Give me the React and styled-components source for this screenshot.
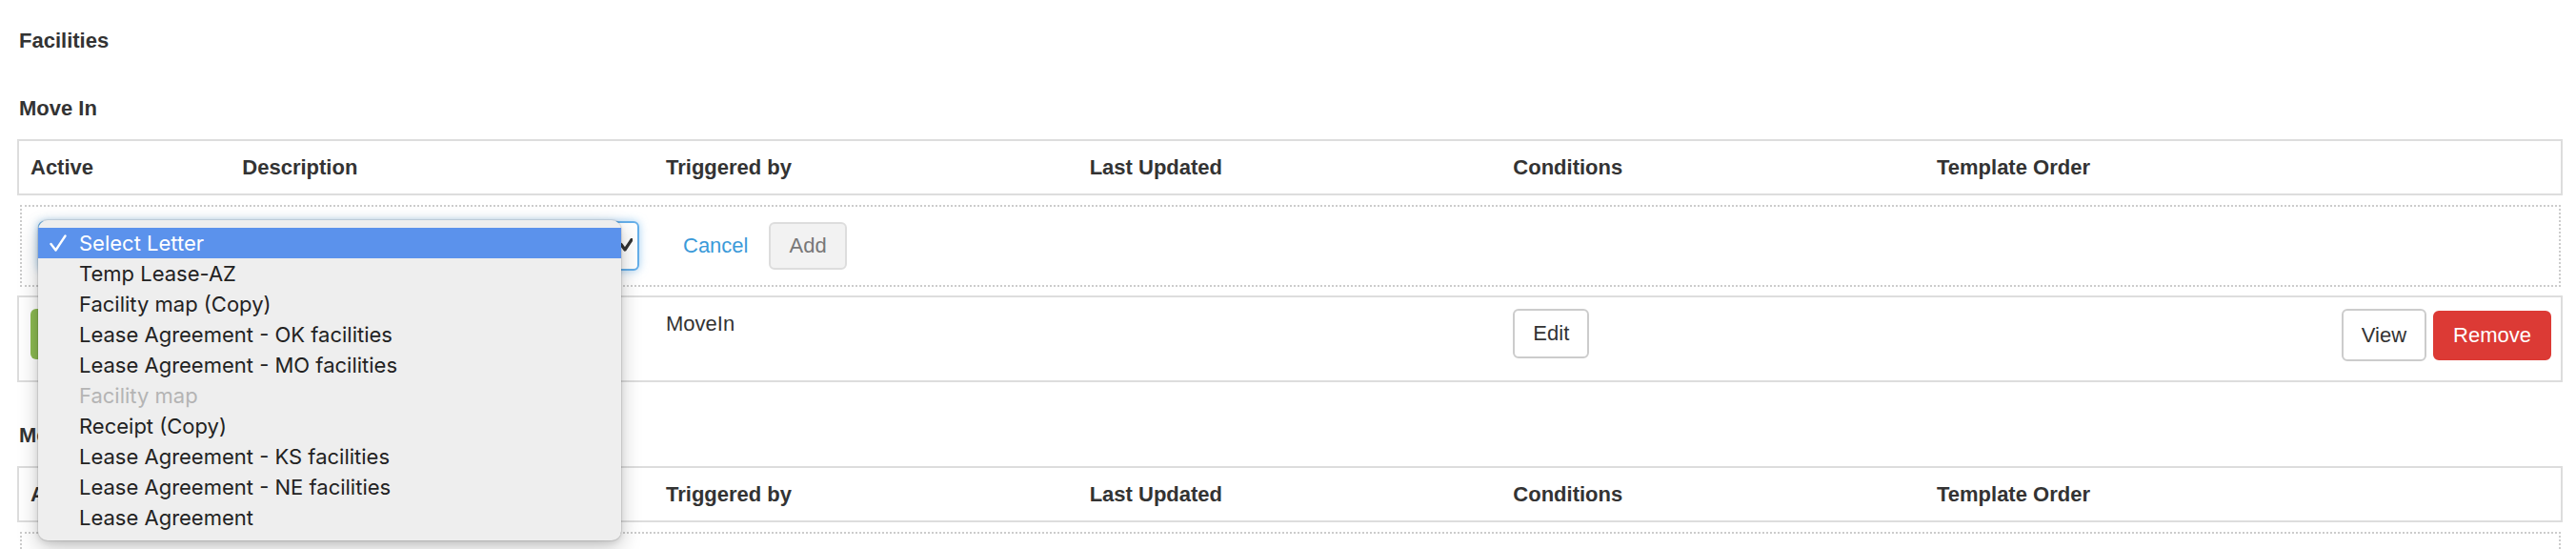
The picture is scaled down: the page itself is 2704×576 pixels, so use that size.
import React from "react";
import styled, { createGlobalStyle } from "styled-components";

const GlobalStyle = createGlobalStyle`
  html, body {
    margin: 0;
    padding: 0;
    background: #ffffff;
  }
  body {
    font-family: "Liberation Sans", Arial, Helvetica, sans-serif;
    color: #333333;
    font-size: 22px;
    line-height: 30px;
  }
  * { box-sizing: border-box; }
`;

const Page = styled.div`
  padding: 28px 14px 0 18px;
`;

const PageTitle = styled.h1`
  margin: 0 0 41px 2px;
  font-size: 22px;
  line-height: 30px;
  font-weight: bold;
`;

const SectionTitle = styled.h2`
  margin: ${(p) => (p.$spaced ? "41px" : "0")} 0 17px 2px;
  font-size: 22px;
  line-height: 30px;
  font-weight: bold;
`;

const columns = "1fr 2fr 2fr 2fr 2fr 3fr";

const HeaderBox = styled.div`
  display: grid;
  grid-template-columns: ${columns};
  align-items: center;
  height: 59px;
  border: 2px solid #dddddd;
  font-weight: bold;
`;

const HeadCell = styled.div`
  padding-left: 12px;
  white-space: nowrap;
`;

const AddRow = styled.div`
  display: flex;
  align-items: center;
  height: 86px;
  margin: 10px 2px 0 3px;
  padding-left: 17px;
  border: 2px dotted #cccccc;
`;

const SelectWrap = styled.div`
  position: relative;
  width: 631px;
  height: 52px;
`;

const FakeSelect = styled.div`
  position: relative;
  width: 100%;
  height: 100%;
  background: #ffffff;
  border: 2px solid #66afe9;
  border-radius: 6px;
  box-shadow: 0 0 10px rgba(102, 175, 233, 0.6);
`;

const SelectArrow = styled.svg`
  position: absolute;
  right: 5px;
  top: 16px;
`;

const Menu = styled.div`
  position: absolute;
  left: 0;
  top: -1px;
  z-index: 10;
  width: 612px;
  padding: 8px 0;
  background: #eeeeee;
  border-radius: 10px;
  box-shadow: 0 0 0 1px rgba(0, 0, 0, 0.08), 0 8px 22px rgba(0, 0, 0, 0.22),
    0 2px 6px rgba(0, 0, 0, 0.1);
`;

const MenuItem = styled.div`
  position: relative;
  display: flex;
  align-items: center;
  height: 32px;
  padding-left: 43px;
  font-family: Inter, "Noto Sans", sans-serif;
  font-size: 22px;
  white-space: nowrap;
  color: ${(p) => (p.$selected ? "#ffffff" : p.$disabled ? "#b4b4b4" : "#222222")};
  background: ${(p) => (p.$selected ? "#5b92ec" : "transparent")};
`;

const Check = styled.svg`
  position: absolute;
  left: 12px;
  top: 7px;
`;

const CancelLink = styled.a`
  margin-left: 46px;
  color: #3b9ad9;
  text-decoration: none;
  cursor: pointer;
`;

const Button = styled.button`
  display: inline-flex;
  align-items: center;
  justify-content: center;
  height: ${(p) => p.$height || 52}px;
  padding: 0 19px;
  border-radius: 6px;
  font-family: inherit;
  font-size: 22px;
  line-height: 30px;
  cursor: pointer;
  border: 2px solid
    ${(p) => (p.$variant === "danger" ? "#dc3a35" : p.$variant === "muted" ? "#dddddd" : "#cccccc")};
  background: ${(p) => (p.$variant === "danger" ? "#dc3a35" : p.$variant === "muted" ? "#f2f2f2" : "#ffffff")};
  color: ${(p) => (p.$variant === "danger" ? "#ffffff" : p.$variant === "muted" ? "#777777" : "#333333")};
`;

const AddButton = styled(Button)`
  height: 50px;
  margin-left: 22px;
`;

const DataRow = styled.div`
  display: grid;
  grid-template-columns: ${columns};
  align-items: start;
  height: 91px;
  margin-top: 9px;
  padding-top: 12px;
  border: 2px solid #dddddd;
`;

const Cell = styled.div`
  padding-left: 12px;
  padding-top: ${(p) => p.$textTop || 0}px;
`;

const Toggle = styled.div`
  width: 104px;
  height: 53px;
  border-radius: 6px;
  background: #8dbb52;
`;

const Actions = styled.div`
  display: flex;
  justify-content: flex-end;
  align-items: flex-start;
  gap: 7px;
  padding-right: 10px;
`;

const RemoveButton = styled(Button)`
  margin-top: 2px;
`;

const headers = [
  "Active",
  "Description",
  "Triggered by",
  "Last Updated",
  "Conditions",
  "Template Order",
];

const options = [
  { label: "Select Letter", selected: true },
  { label: "Temp Lease-AZ" },
  { label: "Facility map (Copy)" },
  { label: "Lease Agreement - OK facilities" },
  { label: "Lease Agreement - MO facilities" },
  { label: "Facility map", disabled: true },
  { label: "Receipt (Copy)" },
  { label: "Lease Agreement - KS facilities" },
  { label: "Lease Agreement - NE facilities" },
  { label: "Lease Agreement" },
];

function TableHeader() {
  return (
    <HeaderBox>
      {headers.map((h) => (
        <HeadCell key={h}>{h}</HeadCell>
      ))}
    </HeaderBox>
  );
}

function LetterSelect() {
  return (
    <SelectWrap>
      <FakeSelect>
        <SelectArrow width="14" height="14" viewBox="0 0 14 14">
          <polyline
            points="2,6.5 6,12 13,1.5"
            fill="none"
            stroke="#333"
            strokeWidth="3.2"
            strokeLinecap="round"
            strokeLinejoin="round"
          />
        </SelectArrow>
      </FakeSelect>
      <Menu>
        {options.map((o) => (
          <MenuItem key={o.label} $selected={o.selected} $disabled={o.disabled}>
            {o.selected && (
              <Check width="18" height="18" viewBox="0 0 18 18">
                <polyline
                  points="1.5,10 6.5,16.5 16.5,1.5"
                  fill="none"
                  stroke="#fff"
                  strokeWidth="2.4"
                  strokeLinecap="round"
                  strokeLinejoin="round"
                />
              </Check>
            )}
            {o.label}
          </MenuItem>
        ))}
      </Menu>
    </SelectWrap>
  );
}

export default function App() {
  return (
    <>
      <GlobalStyle />
      <Page>
        <PageTitle>Facilities</PageTitle>

        <SectionTitle>Move In</SectionTitle>
        <TableHeader />
        <AddRow>
          <LetterSelect />
          <CancelLink>Cancel</CancelLink>
          <AddButton $variant="muted">Add</AddButton>
        </AddRow>
        <DataRow>
          <Cell>
            <Toggle />
          </Cell>
          <Cell />
          <Cell $textTop={1}>MoveIn</Cell>
          <Cell />
          <Cell>
            <Button>Edit</Button>
          </Cell>
          <Actions>
            <Button $height={55}>View</Button>
            <RemoveButton $variant="danger">Remove</RemoveButton>
          </Actions>
        </DataRow>

        <SectionTitle $spaced>Move Out</SectionTitle>
        <TableHeader />
        <AddRow />
      </Page>
    </>
  );
}
